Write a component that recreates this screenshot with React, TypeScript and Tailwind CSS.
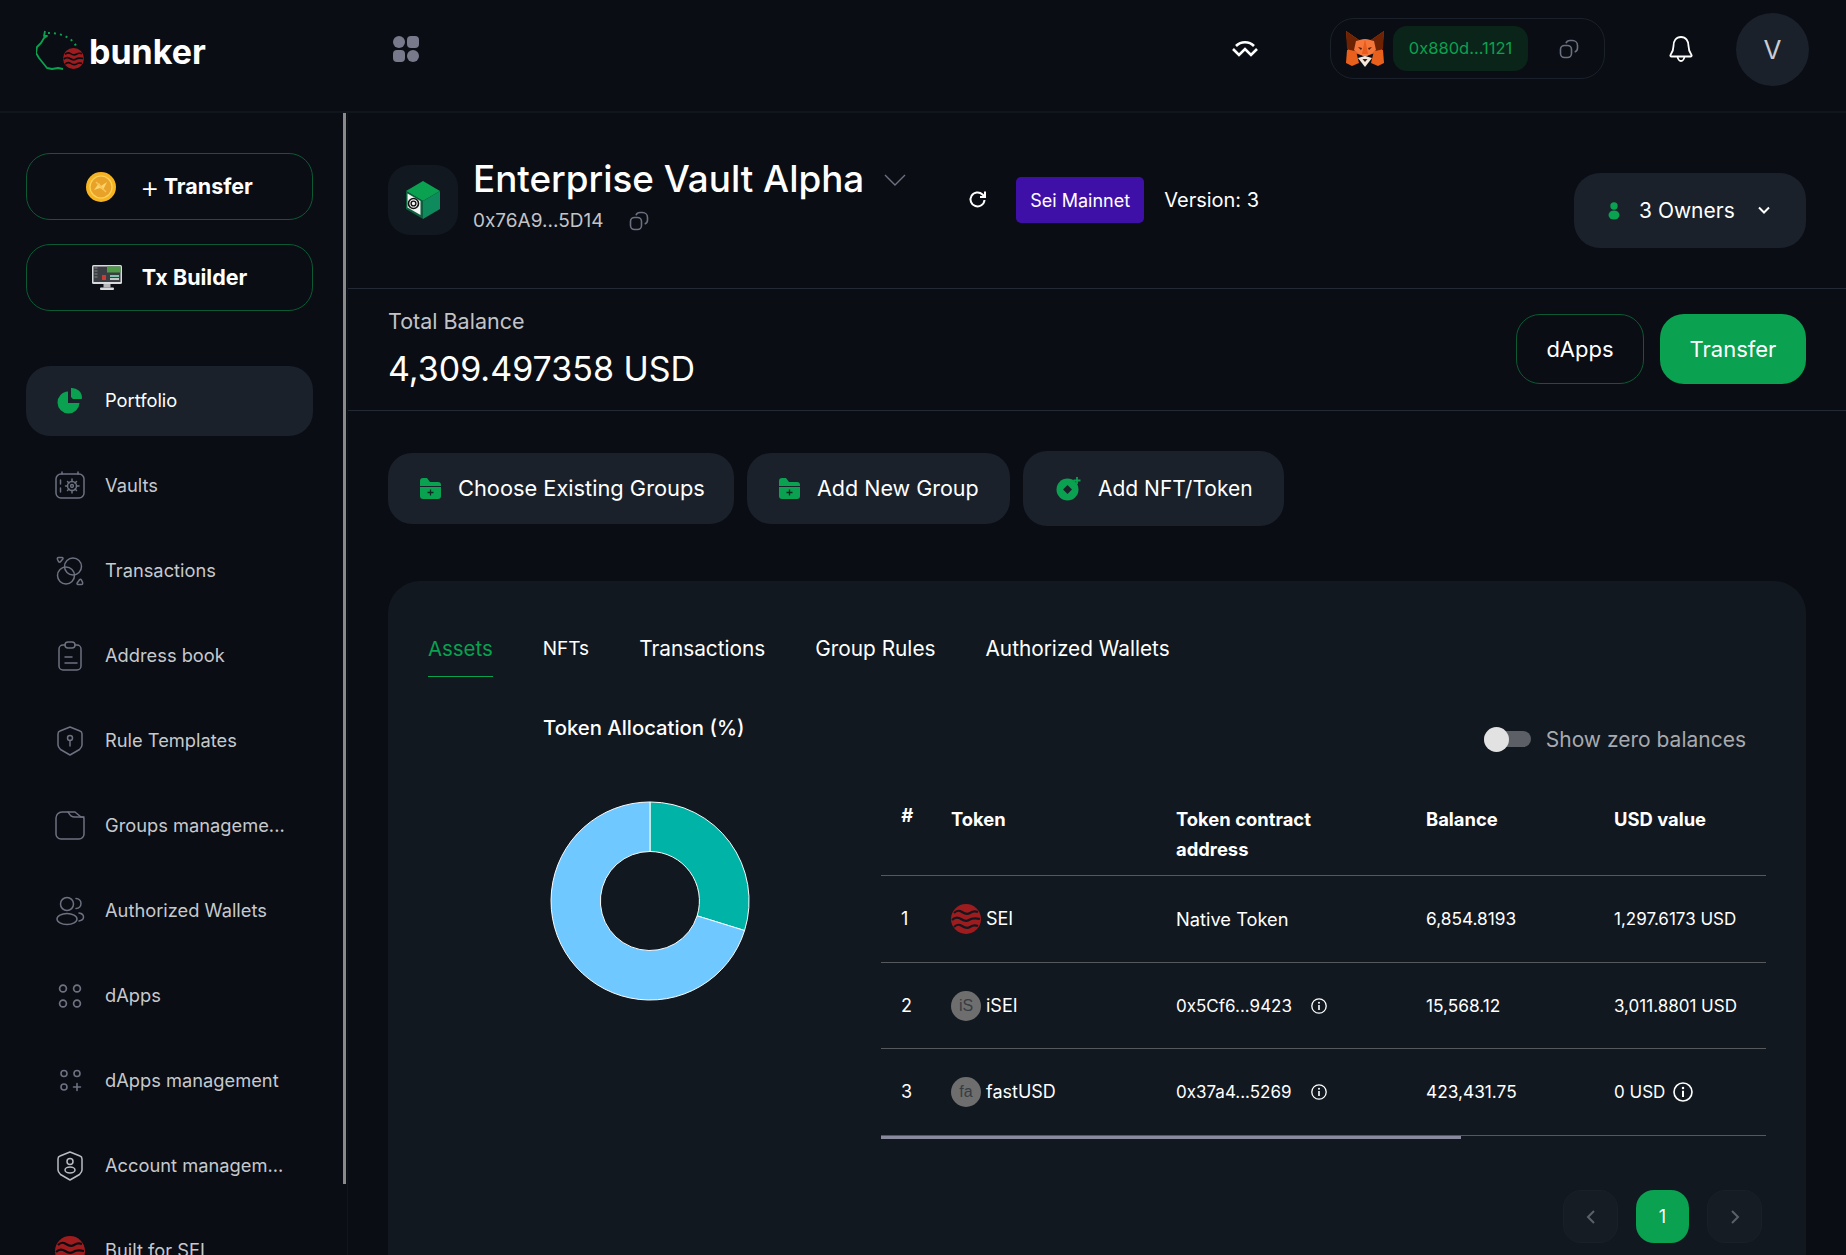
import React from "react";

const G = "#0aa150";

function Sei({ size, cut }: { size: number; cut: string }) {
  return (
    <svg width={size} height={size} viewBox="0 0 30 30" className="shrink-0">
      <circle cx="15" cy="15" r="15" fill="#9f1c1e" />
      <path d="M3 9c3-3 5-3 8-1s5 3 8 1 5-2 8-1" fill="none" stroke={cut} strokeWidth="2.2" />
      <path d="M1 16c3-3 6-3 9-1s5 3 8 1 6-2 11-1" fill="none" stroke={cut} strokeWidth="2.2" />
      <path d="M3 23c3-3 5-3 8-1s5 3 8 1 5-2 8-1" fill="none" stroke={cut} strokeWidth="2.2" />
    </svg>
  );
}

function Logo() {
  return (
    <svg width="48" height="40" viewBox="0 0 48 40" className="shrink-0">
      <path d="M9 1l-1 5h3l-3 2-3 5-4 4-1 6 3 5 4 5 4 5 5 1 6-1 5 1" fill="none" stroke={G} strokeWidth="1.8" strokeLinejoin="round" />
      <path d="M12 3c11 0 24 3 29 15" fill="none" stroke={G} strokeWidth="2" strokeDasharray="2 4" />
      <g transform="translate(27 18) scale(0.7)">
        <circle cx="15" cy="15" r="15" fill="#9f1c1e" />
        <path d="M3 9c3-3 5-3 8-1s5 3 8 1 5-2 8-1M1 16c3-3 6-3 9-1s5 3 8 1 6-2 11-1M3 23c3-3 5-3 8-1s5 3 8 1 5-2 8-1" fill="none" stroke="#0a0d13" strokeWidth="2.4" />
      </g>
    </svg>
  );
}

function Copy({ c = "#6b7080" }: { c?: string }) {
  return (
    <svg width="20" height="20" viewBox="0 0 20 20" fill="none" stroke={c} strokeWidth="1.6" className="shrink-0">
      <rect x="1.5" y="6.5" width="11" height="12" rx="4" />
      <path d="M7 4.2C7.6 2.5 9 1.5 11 1.5h2.5c2.8 0 5 2.2 5 5V9c0 2-1 3.400-2.800 4" />
    </svg>
  );
}

function Info({ size = 16 }: { size?: number }) {
  return (
    <svg width={size} height={size} viewBox="0 0 16 16" fill="none" className="shrink-0">
      <circle cx="8" cy="8" r="7.2" stroke="#fff" strokeWidth="1.300" />
      <circle cx="8" cy="4.700" r="1" fill="#fff" />
      <path d="M8 7v5" stroke="#fff" strokeWidth="1.600" />
    </svg>
  );
}

function FolderPlus() {
  return (
    <svg width="21" height="21" viewBox="0 0 21 21" className="shrink-0">
      <path d="M0 3a3 3 0 0 1 3-3h4l3 4h8a3 3 0 0 1 3 3v1H0z" fill={G} />
      <path d="M0 9h21v9a3 3 0 0 1-3 3H3a3 3 0 0 1-3-3z" fill={G} />
      <path d="M10.500 11.500v6M7.500 14.500h6" stroke="#0d2b20" strokeWidth="1.300" />
    </svg>
  );
}

function NavIcon({ k }: { k: string }) {
  const p = { width: 30, height: 30, viewBox: "0 0 30 30", fill: "none", stroke: "#6d7180", strokeWidth: 1.5, strokeLinecap: "round" as const, strokeLinejoin: "round" as const, className: "shrink-0" };
  switch (k) {
    case "portfolio":
      return (
        <svg width="30" height="30" viewBox="0 0 30 30" className="shrink-0">
          <path d="M13 5.500a11 11 0 1 0 11.500 11.500H13z" fill={G} />
          <path d="M16 3a10 10 0 0 1 11 10c0 .6-.4 1-1 1H16z" fill={G} transform="translate(0 -1)" />
          <path d="M15 14l2-2" stroke="#1a212b" strokeWidth="2" />
        </svg>
      );
    case "vaults":
      return (
        <svg {...p}>
          <rect x="1" y="3" width="28" height="24" rx="5" />
          <path d="M7 1v2M23 1v2M5.500 9v4M5.500 17v4" />
          <circle cx="17" cy="15" r="4.500" />
          <circle cx="17" cy="15" r="1.400" />
          <path d="M17 8v2.500M17 19.500V22M10.500 15H12.500M21.500 15H24M12.500 10.500l1.500 1.500M21.500 10.500L20 12M12.500 19.500l1.500-1.500M21.500 19.500L20 18" />
        </svg>
      );
    case "tx":
      return (
        <svg {...p}>
          <circle cx="18" cy="10.500" r="8.500" />
          <circle cx="11" cy="19.500" r="8.500" />
          <path d="M3.500 1.500h3.500c1 0 1.300.8.800 1.500L5.500 5.800c-.6.700-1.300.6-1.800 0L2.500 3.500c-.5-1 0-2 1-2zM26.500 28.500H23c-1 0-1.300-.8-.8-1.500l2.300-3.200c.6-.7 1.300-.6 1.800 0l1.200 2.300c.5 1.400 0 2.400-1 2.400z" />
        </svg>
      );
    case "book":
      return (
        <svg {...p}>
          <path d="M10 4H8a4 4 0 0 0-4 4v17a4 4 0 0 0 4 4h14a4 4 0 0 0 4-4V8a4 4 0 0 0-4-4h-2" />
          <rect x="10" y="1" width="10" height="6" rx="3" />
          <path d="M10 16h7M10 22h12" />
        </svg>
      );
    case "rule":
      return (
        <svg {...p}>
          <path d="M15 1l10 4c1.500.5 2 1.500 2 3v11c0 2-1 3-2.500 4.500L15 29l-9.500-5.500C4 22 3 21 3 19V8c0-1.500.5-2.500 2-3z" />
          <circle cx="15" cy="12" r="2.500" />
          <path d="M15 14.500V20" />
        </svg>
      );
    case "groups":
      return (
        <svg {...p}>
          <path d="M7 1h13l6 5h1a2 2 0 0 1 2 2v15a5 5 0 0 1-5 5H6a5 5 0 0 1-5-5V7a6 6 0 0 1 6-6z" />
          <path d="M13 1c2 3 3 5 7 5h9" />
        </svg>
      );
    case "auth":
      return (
        <svg {...p}>
          <circle cx="12" cy="8" r="6.500" />
          <ellipse cx="12" cy="23" rx="10" ry="5.500" />
          <path d="M21 2.500c3 .2 5 2.500 5 5s-2 4.800-5 5M24 17c3 .5 4.500 2 4.500 4s-1.500 3.500-4.500 4" />
        </svg>
      );
    case "dapps":
      return (
        <svg {...p} strokeWidth={1.7}>
          <circle cx="8" cy="7.500" r="3.400" /><circle cx="22" cy="7.500" r="3.400" /><circle cx="8" cy="22.500" r="3.400" /><circle cx="22" cy="22.500" r="3.400" />
        </svg>
      );
    case "dappsm":
      return (
        <svg {...p} strokeWidth={1.6}>
          <circle cx="9" cy="7.500" r="3" /><circle cx="22" cy="7.500" r="3" /><circle cx="9" cy="21" r="3" />
          <path d="M22 17.500v7M18.500 21h7" />
        </svg>
      );
    case "account":
      return (
        <svg {...p} stroke="#b9bcc4">
          <path d="M15 1l10 4c1.500.5 2 1.500 2 3v11c0 2-1 3-2.500 4.500L15 29l-9.500-5.500C4 22 3 21 3 19V8c0-1.500.5-2.500 2-3z" />
          <circle cx="15" cy="10.500" r="3" />
          <ellipse cx="15" cy="19" rx="5" ry="3" />
        </svg>
      );
    default:
      return <Sei size={30} cut="#0a0d13" />;
  }
}

const nav = [
  ["portfolio", "Portfolio"],
  ["vaults", "Vaults"],
  ["tx", "Transactions"],
  ["book", "Address book"],
  ["rule", "Rule Templates"],
  ["groups", "Groups manageme..."],
  ["auth", "Authorized Wallets"],
  ["dapps", "dApps"],
  ["dappsm", "dApps management"],
  ["account", "Account managem..."],
  ["sei", "Built for SEI"],
];

function Fox() {
  return (
    <svg width="38" height="36" viewBox="0 0 38 36" className="shrink-0">
      <path d="M0 0l13 9 6-1 6 1L38 0l-2 20-6 2-11 3-11-3-6-2z" fill="#e2621f" />
      <path d="M0 0l13 9-3 12-9-3z" fill="#6e2204" />
      <path d="M38 0L25 9l3 12 9-3z" fill="#6e2204" />
      <path d="M10 10l9-2 9 2 2 9-5 4-6 3-6-3-5-4z" fill="#f4763a" />
      <path d="M19 8l-3 15h6z" fill="#e85b1a" />
      <path d="M1 19l9 1 3 12-7 3-6-3z" fill="#e8601c" />
      <path d="M37 19l-9 1-3 12 7 3 6-3z" fill="#e8601c" />
      <path d="M12 27l7 9 7-9-7-2z" fill="#f3e7de" />
      <path d="M16.500 28h5L19 31z" fill="#2e1a0f" />
      <path d="M12 16l4 1-1 2zM26 16l-4 1 1 2z" fill="#4a1c05" />
    </svg>
  );
}

function Cube() {
  return (
    <svg width="34" height="38" viewBox="0 0 34 38">
      <path d="M17 0l17 10-17 10L0 10z" fill="#0aa150" />
      <path d="M17 20l17-10v18L17 38z" fill="#0e8a5c" />
      <path d="M0 10l17 10v18L0 28z" fill="#0c5f3d" />
      <path d="M1.500 12.500l13 7.500v14l-13-7.500z" fill="#f4f4f4" />
      <circle cx="7.500" cy="22.500" r="5" fill="none" stroke="#111" strokeWidth="1.600" />
      <circle cx="7.500" cy="22.500" r="2.400" fill="none" stroke="#111" strokeWidth="1.400" />
    </svg>
  );
}

function Coin() {
  return (
    <svg width="30" height="30" viewBox="0 0 30 30" className="shrink-0">
      <circle cx="15" cy="15" r="15" fill="#f7b422" />
      <circle cx="15" cy="15" r="11" fill="#e8a22a" stroke="#fdd35a" strokeWidth="1.200" />
      <path d="M8 18l5-7 2 3 6-4-4 8-3-2z" fill="#fbd56b" />
      <path d="M10 10l10 10" stroke="#f6c453" strokeWidth="1.600" />
    </svg>
  );
}

function Monitor() {
  return (
    <svg width="30" height="25" viewBox="0 0 30 25" className="shrink-0">
      <rect x="0" y="0" width="30" height="19" rx="1.500" fill="#d9dadd" />
      <rect x="1.500" y="1.500" width="27" height="15.500" fill="#3a3d42" />
      <rect x="15" y="1.500" width="13.500" height="6" fill="#4f9a46" />
      <rect x="10" y="10" width="4" height="5" fill="#c93b34" />
      <rect x="18" y="10" width="9" height="2" fill="#7fc4a8" />
      <rect x="18" y="13" width="9" height="2" fill="#bfc7c9" />
      <path d="M2.500 3h3M2.500 6h3M2.500 9h3M2.500 12h3" stroke="#888" />
      <rect x="11.500" y="19" width="7" height="3.500" fill="#b7b8bb" />
      <rect x="8" y="22.500" width="14" height="2.500" rx="1" fill="#d9dadd" />
    </svg>
  );
}

const rows = [
  { n: "1", icon: null, name: "SEI", addr: "Native Token", addrCls: "text-[18.3px]", info: false, bal: "6,854.8193", usd: "1,297.6173 USD", usdInfo: false, h: "h-[87px]" },
  { n: "2", icon: "iS", name: "iSEI", addr: "0x5Cf6...9423", addrCls: "text-[17px]", info: true, bal: "15,568.12", usd: "3,011.8801 USD", usdInfo: false, h: "h-[86px]" },
  { n: "3", icon: "fa", name: "fastUSD", addr: "0x37a4...5269", addrCls: "text-[17px]", info: true, bal: "423,431.75", usd: "0 USD", usdInfo: true, h: "h-[87px]" },
];

export default function App() {
  return (
    <div className="h-[1255px] overflow-hidden bg-[#0a0d13] text-white flex flex-col [font-family:Inter,'Liberation_Sans',sans-serif]">
      <header className="h-[113px] shrink-0 border-b-2 border-[#11161d] flex items-start pr-[37px]">
        <div className="w-[393px] pl-[36px] pt-[27px] flex items-center gap-[5px]">
          <Logo />
          <span className="text-[34px] leading-[40px] font-bold text-white mt-[5px]">bunker</span>
        </div>
        <div className="mt-[36px] grid grid-cols-2 gap-[2px] w-[26px] h-[26px]">
          <span className="rounded-full bg-[#787a8c]" />
          <span className="rounded-[4px] bg-[#787a8c]" />
          <span className="rounded-[4px] bg-[#787a8c]" />
          <span className="rounded-full bg-[#787a8c]" />
        </div>
        <div className="flex-1" />
        <svg width="26" height="17" viewBox="0 0 26 17" className="mt-[40px] mr-[72px]" fill="none" stroke="#fff" strokeWidth="2.600">
          <path d="M4 6c5-5 13-5 18 0" />
          <path d="M1 9l6 6 6-6 6 6 6-6" />
        </svg>
        <div className="mt-[18px] w-[275px] h-[61px] rounded-[24px] border border-[#1b212a] flex items-center pl-[15px]">
          <Fox />
          <div className="ml-[9px] w-[135px] h-[45px] rounded-[14px] bg-[#0b2419] flex items-center justify-center text-[16.5px] text-[#0aa150]">0x880d...1121</div>
          <div className="ml-[31px]"><Copy /></div>
        </div>
        <svg width="24" height="28" viewBox="0 0 24 28" fill="none" stroke="#fff" strokeWidth="1.800" className="mt-[35px] ml-[64px]" strokeLinejoin="round">
          <path d="M12 2c-5 0-7.500 4-7.500 9 0 5-1.500 7-3 9-.5.800 0 1.500 1 1.500h19c1 0 1.500-.7 1-1.500-1.500-2-3-4-3-9 0-5-2.500-9-7.500-9z" />
          <path d="M8.500 21.500c.3 2.500 2 4.500 3.500 4.500s3.200-2 3.500-4.500" />
        </svg>
        <div className="ml-[43px] mt-[13px] w-[73px] h-[73px] rounded-full bg-[#1a212b] flex items-center justify-center text-[26px] text-[#c9ccd3]">V</div>
      </header>

      <div className="flex flex-1 min-h-0">
        <aside className="relative w-[348px] shrink-0 border-r border-[#11161d] pl-[26px] pr-[34px] pt-[40px]">
          <div className="absolute right-[1px] top-0 w-[3px] h-[1071px] bg-[#8a8a8a]" />
          <div className="flex flex-col gap-[24px]">
            <button className="h-[67px] rounded-[24px] border border-[#0c5a33] flex items-center justify-center gap-[24px] text-[21.5px] font-bold">
              <Coin />
              <span className="flex items-center gap-[4px]"><span className="text-[30px] leading-none font-light">+</span>Transfer</span>
            </button>
            <button className="h-[67px] rounded-[24px] border border-[#0c5a33] flex items-center justify-center gap-[20px] text-[21.5px] font-bold">
              <Monitor />
              <span>Tx Builder</span>
            </button>
          </div>
          <nav className="mt-[55px] flex flex-col gap-[15px]">
            {nav.map(([k, label], i) => (
              <div key={k} className={i === 0 ? "h-[70px] rounded-[24px] bg-[#1a212b] flex items-center pl-[29px] gap-[20px] text-[18.300px] text-white" : "h-[70px] rounded-[24px] flex items-center pl-[29px] gap-[20px] text-[18.300px] text-[#c6c9ce]"}>
                <NavIcon k={k} />
                <span className="whitespace-nowrap -mt-[1px]">{label}</span>
              </div>
            ))}
          </nav>
        </aside>

        <main className="flex-1 min-w-0">
          <section className="h-[176px] border-b border-[#232a33] flex items-start pl-[40px] pr-[40px] pt-[52px]">
            <div className="w-[70px] h-[70px] rounded-[22px] bg-[#12181f] flex items-center justify-center"><Cube /></div>
            <div className="ml-[15px] -mt-[9px]">
              <div className="text-[36.800px] leading-[46px] font-medium whitespace-nowrap">Enterprise Vault Alpha</div>
              <div className="flex items-center mt-[6px] text-[19px] leading-[26px] text-[#c2c4c8]">
                <span>0x76A9...5D14</span>
                <span className="ml-[26px]"><Copy /></span>
              </div>
            </div>
            <svg width="22" height="12" viewBox="0 0 22 12" fill="none" stroke="#6d7180" strokeWidth="1.400" className="ml-[20px] mt-[9px]"><path d="M1 1l10 10L21 1" /></svg>
            <svg width="20" height="20" viewBox="0 0 20 20" fill="none" stroke="#fff" strokeWidth="2" className="ml-[62px] mt-[25px]"><path d="M16.500 10a7 7 0 1 1-2-5.500L17 7M17 1.500V7h-5" /></svg>
            <div className="ml-[28px] mt-[12px] w-[128px] h-[46px] rounded-[5px] bg-[#3f10a8] flex items-center justify-center text-[18px]">Sei Mainnet</div>
            <div className="ml-[20px] mt-[21px] text-[20px] leading-[28px]">Version: 3</div>
            <div className="ml-auto mt-[8px] w-[232px] h-[75px] rounded-[26px] bg-[#1a212b] flex items-center pl-[34px]">
              <svg width="12" height="18" viewBox="0 0 12 18" fill={G}><circle cx="6" cy="4" r="3.700" /><ellipse cx="6" cy="13" rx="5.500" ry="4.500" /></svg>
              <span className="ml-[19px] text-[21px] whitespace-nowrap">3 Owners</span>
              <svg width="14" height="9" viewBox="0 0 14 9" fill="none" stroke="#fff" strokeWidth="2" className="ml-[22px]"><path d="M2 1.500l5 5 5-5" /></svg>
            </div>
          </section>

          <section className="h-[122px] border-b border-[#232a33] flex items-start justify-between pl-[40px] pr-[40px]">
            <div className="pt-[18px]">
              <div className="text-[21.500px] leading-[28px] text-[#c2c4c8]">Total Balance</div>
              <div className="mt-[11px] text-[34px] leading-[46px] font-normal">4,309.497358 USD</div>
            </div>
            <div className="flex gap-[16px] mt-[25px]">
              <button className="w-[128px] h-[70px] rounded-[24px] border border-[#0c5a33] text-[22px]">dApps</button>
              <button className="w-[146px] h-[70px] rounded-[24px] bg-[#0aa150] text-[22px]">Transfer</button>
            </div>
          </section>

          <div className="pl-[40px] mt-[40px] flex gap-[13px] items-center">
            <button className="w-[346px] h-[71px] rounded-[24px] bg-[#1a212b] flex items-center pl-[32px] gap-[17px] text-[21.800px]"><FolderPlus />Choose Existing Groups</button>
            <button className="w-[263px] h-[71px] rounded-[24px] bg-[#1a212b] flex items-center pl-[32px] gap-[17px] text-[21.500px]"><FolderPlus />Add New Group</button>
            <button className="w-[261px] h-[75px] rounded-[24px] bg-[#1a212b] flex items-center pl-[33px] gap-[17px] text-[21px]">
              <svg width="25" height="24" viewBox="0 0 25 24" className="shrink-0">
                <circle cx="11.500" cy="12.500" r="11" fill={G} />
                <path d="M11.500 8l4.500 4.500-4.500 4.500L7 12.500z" fill="#1a212b" />
                <path d="M21 0v7M17.500 3.500h7" stroke={G} strokeWidth="1.800" />
              </svg>
              Add NFT/Token
            </button>
          </div>

          <section className="ml-[40px] mr-[40px] mt-[55px] h-[760px] rounded-[32px] bg-[#111820]">
            <div className="pl-[40px] pt-[54px] flex gap-[50px] text-[20.800px] leading-[28px]">
              <div className="pb-[13px] border-b border-[#0aa150] text-[#0aa150] text-[20.400px]">Assets</div>
              <div className="text-[19px]">NFTs</div>
              <div>Transactions</div>
              <div>Group Rules</div>
              <div>Authorized Wallets</div>
            </div>
            <div className="flex">
              <div className="w-[493px] shrink-0 pl-[155px] pt-[37px]">
                <div className="text-[20.300px] leading-[28px] font-medium">Token Allocation (%)</div>
                <svg width="202" height="202" viewBox="0 0 204 204" className="mt-[58px] ml-[6px]">
                  <path d="M102 2A100 100 0 0 1 197.500 131.800L149.600 117A50 50 0 0 0 102 52Z" fill="#00b3a7" stroke="#fff" strokeWidth="1" />
                  <path d="M197.500 131.800A100 100 0 1 1 102 2L102 52A50 50 0 1 0 149.600 117Z" fill="#6fc8ff" stroke="#fff" strokeWidth="1" />
                </svg>
              </div>
              <div className="flex-1 min-w-0 pr-[40px] pt-[50px]">
                <div className="flex items-center justify-end pr-[20px] h-[25px] gap-[15px]">
                  <div className="relative w-[47px] h-[25px]">
                    <div className="absolute left-0 right-0 top-[4px] h-[16px] rounded-full bg-[#5c5f66]" />
                    <div className="absolute left-0 top-0 w-[25px] h-[25px] rounded-full bg-[#e2e2e2]" />
                  </div>
                  <span className="text-[21px] leading-[28px] text-[#a8aaae]">Show zero balances</span>
                </div>
                <div className="relative mt-[52px]">
                  <div className="grid grid-cols-[70px_225px_250px_188px_152px] border-b border-[#55585d] h-[72px] text-[18.400px] leading-[30px] font-bold">
                    <div className="pl-[20px] -mt-[4px] italic">#</div>
                    <div>Token</div>
                    <div>Token contract<br />address</div>
                    <div>Balance</div>
                    <div>USD value</div>
                  </div>
                  {rows.map((r) => (
                    <div key={r.n} className={`grid grid-cols-[70px_225px_250px_188px_152px] items-center border-b border-[#55585d] ${r.h} text-[18px] leading-[30px]`}>
                      <div className="pl-[20px]">{r.n}</div>
                      <div className="flex items-center gap-[5px]">
                        {r.icon ? (
                          <span className="w-[30px] h-[30px] rounded-full bg-[#6e6e6e] flex items-center justify-center text-[16px] text-[#373c42] [font-family:'Liberation_Sans',sans-serif]">{r.icon}</span>
                        ) : (
                          <Sei size={30} cut="#111820" />
                        )}
                        <span>{r.name}</span>
                      </div>
                      <div className="flex items-center gap-[19px] whitespace-nowrap">
                        <span className={r.addrCls}>{r.addr}</span>
                        {r.info ? <Info /> : null}
                      </div>
                      <div className="text-[17.300px]">{r.bal}</div>
                      <div className="flex items-center gap-[8px] whitespace-nowrap text-[17px]">
                        <span>{r.usd}</span>
                        {r.usdInfo ? <Info size={20} /> : null}
                      </div>
                    </div>
                  ))}
                  <div className="absolute left-0 bottom-[-3px] w-[580px] h-[3px] bg-[#8a8a9e]" />
                </div>
                <div className="mt-[54px] pr-[4px] flex justify-end gap-[18px]">
                  <div className="w-[55px] h-[53px] rounded-[18px] bg-[#151c24] border border-[#1a2029] flex items-center justify-center">
                    <svg width="10" height="14" viewBox="0 0 10 14" fill="none" stroke="#5c6068" strokeWidth="2"><path d="M8 1L2 7l6 6" /></svg>
                  </div>
                  <div className="w-[53px] h-[53px] rounded-[18px] bg-[#0aa150] flex items-center justify-center text-[18px]">1</div>
                  <div className="w-[55px] h-[53px] rounded-[18px] bg-[#151c24] border border-[#1a2029] flex items-center justify-center">
                    <svg width="10" height="14" viewBox="0 0 10 14" fill="none" stroke="#5c6068" strokeWidth="2"><path d="M2 1l6 6-6 6" /></svg>
                  </div>
                </div>
              </div>
            </div>
          </section>
        </main>
      </div>
    </div>
  );
}
